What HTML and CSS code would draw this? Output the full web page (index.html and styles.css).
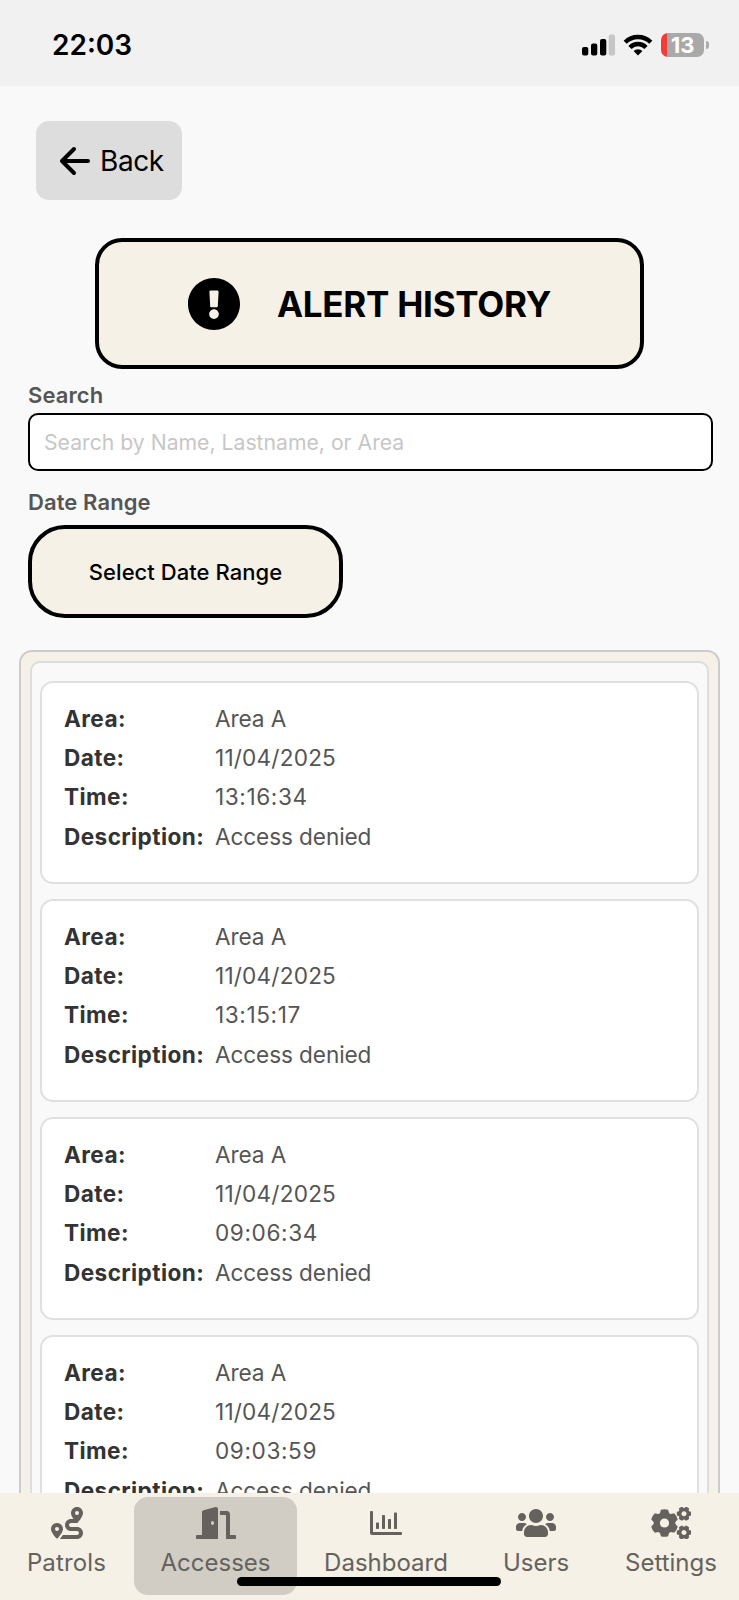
FILE: index.html
```html
<!DOCTYPE html>
<html lang="en">
<head>
<meta charset="utf-8">
<title>Alert History</title>
<link rel="stylesheet" href="styles.css">
</head>
<body>
<div class="screen">
  <header class="status">
    <span class="clock">22:03</span>
    <div class="indicators">
      <svg class="signal" width="33" height="22" viewBox="0 0 33 22"><rect x="0" y="13" width="6.300" height="8.500" rx="2"/><rect x="9" y="9.500" width="6.300" height="12" rx="2"/><rect x="18" y="5" width="6.300" height="16.500" rx="2"/><rect x="26.700" y="0.500" width="6.300" height="21" rx="2" fill="#c6c6c6"/></svg>
      <svg class="wifi" width="30" height="22" viewBox="0 0 30 22"><g fill="none" stroke="#000" stroke-width="4.400"><path d="M2.200 8.200A18.200 18.200 0 0 1 27.800 8.200"/><path d="M7 13.400A11 11 0 0 1 23 13.400"/></g><path d="M15 21.500l-4.400-4.500a6.300 6.300 0 0 1 8.800 0z"/></svg>
      <div class="battery"><span class="level">13</span></div><span class="cap"></span>
    </div>
  </header>

  <main class="content">
    <button class="back">
      <svg width="32" height="30" viewBox="0 0 32 30" fill="none" stroke="#000" stroke-width="4" stroke-linecap="round" stroke-linejoin="round"><path d="M16 3L4 15l12 12M4.500 15H30"/></svg>
      Back
    </button>

    <h1 class="title">
      <svg width="52" height="52" viewBox="8 8 496 496"><path d="M504 256c0 136.997-111.043 248-248 248S8 392.997 8 256C8 119.083 119.043 8 256 8s248 111.083 248 248zm-248 50c-25.405 0-46 20.595-46 46s20.595 46 46 46 46-20.595 46-46-20.595-46-46-46zm-43.673-165.346l7.418 136c.347 6.364 5.609 11.346 11.982 11.346h48.546c6.373 0 11.635-4.982 11.982-11.346l7.418-136c.375-6.874-5.098-12.654-11.982-12.654h-63.383c-6.884 0-12.356 5.780-11.981 12.654z"/></svg>
      <span>ALERT HISTORY</span>
    </h1>

    <div class="filters">
      <label class="label" for="q">Search</label>
      <input class="search" id="q" placeholder="Search by Name, Lastname, or Area">
      <span class="label label-date">Date Range</span>
      <button class="range">Select Date Range</button>
    </div>

    <section class="panel">
      <div class="list">
        <dl class="card"><dt>Area:</dt><dd>Area A</dd><dt>Date:</dt><dd class="date">11/04/2025</dd><dt>Time:</dt><dd class="time">13:16:34</dd><dt>Description:</dt><dd>Access denied</dd></dl>
        <dl class="card"><dt>Area:</dt><dd>Area A</dd><dt>Date:</dt><dd class="date">11/04/2025</dd><dt>Time:</dt><dd class="time">13:15:17</dd><dt>Description:</dt><dd>Access denied</dd></dl>
        <dl class="card"><dt>Area:</dt><dd>Area A</dd><dt>Date:</dt><dd class="date">11/04/2025</dd><dt>Time:</dt><dd class="time">09:06:34</dd><dt>Description:</dt><dd>Access denied</dd></dl>
        <dl class="card"><dt>Area:</dt><dd>Area A</dd><dt>Date:</dt><dd class="date">11/04/2025</dd><dt>Time:</dt><dd class="time">09:03:59</dd><dt>Description:</dt><dd>Access denied</dd></dl>
      </div>
    </section>
  </main>

  <nav class="tabs">
    <a class="tab"><svg width="32" height="32" viewBox="0 0 512 512"><path d="M512 96c0 50.200-59.100 125.100-84.600 155c-3.800 4.400-9.400 6.100-14.500 5H320c-17.700 0-32 14.300-32 32s14.300 32 32 32h96c53 0 96 43 96 96s-43 96-96 96H139.600c8.700-9.900 19.300-22.600 30-36.800c6.300-8.400 12.800-17.600 19-27.200H416c17.700 0 32-14.300 32-32s-14.300-32-32-32H320c-53 0-96-43-96-96s43-96 96-96h39.800c-21-31.500-39.800-67.700-39.800-96c0-53 43-96 96-96s96 43 96 96zM117.100 489.100c-3.800 4.300-7.200 8.100-10.100 11.300l-1.800 2-.2-.2c-6 4.600-14.600 4-20-1.800C59.800 473 0 402.500 0 352c0-53 43-96 96-96s96 43 96 96c0 30-21.100 67-43.500 97.900c-10.700 14.700-21.700 28-30.800 38.500l-.6 .7zM128 352a32 32 0 1 0 -64 0 32 32 0 1 0 64 0zM416 128a32 32 0 1 0 0-64 32 32 0 1 0 0 64z"/></svg><span>Patrols</span></a>
    <a class="tab active"><svg width="40" height="32" viewBox="0 0 640 512"><path d="M624 448h-80V113.450C544 86.190 522.470 64 496 64H384v64h96v384h144c8.840 0 16-7.160 16-16v-32c0-8.840-7.160-16-16-16zM312.240 1.010l-192 49.740C105.990 54.440 96 67.700 96 82.920V448H16c-8.840 0-16 7.160-16 16v32c0 8.840 7.160 16 16 16h336V33.180c0-21.580-19.560-37.410-39.760-32.170zM264 288c-13.250 0-24-14.330-24-32s10.750-32 24-32 24 14.330 24 32-10.750 32-24 32z"/></svg><span>Accesses</span></a>
    <a class="tab"><svg width="32" height="32" viewBox="0 0 32 32"><path d="M0 5a1 1 0 0 1 1-1h1a1 1 0 0 1 1 1v20h28a1 1 0 0 1 1 1v1a1 1 0 0 1-1 1H2a2 2 0 0 1-2-2z"/><rect x="6" y="15.500" width="3" height="6.500" rx=".7"/><rect x="12" y="8" width="3" height="14" rx=".7"/><rect x="18" y="12" width="3" height="10" rx=".7"/><rect x="24" y="5.500" width="3" height="16.500" rx=".7"/></svg><span>Dashboard</span></a>
    <a class="tab"><svg width="40" height="32" viewBox="0 0 640 512"><path d="M96 224c35.300 0 64-28.700 64-64s-28.700-64-64-64-64 28.700-64 64 28.700 64 64 64zm448 0c35.300 0 64-28.700 64-64s-28.700-64-64-64-64 28.700-64 64 28.700 64 64 64zm32 32h-64c-17.600 0-33.500 7.100-45.100 18.600 40.300 22.100 68.900 62 75.100 109.400h66c17.700 0 32-14.300 32-32v-32c0-35.300-28.700-64-64-64zm-256 0c61.900 0 112-50.100 112-112S381.900 32 320 32 208 82.100 208 144s50.100 112 112 112zm76.800 32h-8.300c-20.800 10-43.900 16-68.500 16s-47.600-6-68.500-16h-8.300C179.600 288 128 339.600 128 403.200V432c0 26.500 21.500 48 48 48h288c26.500 0 48-21.500 48-48v-28.800c0-63.600-51.600-115.200-115.200-115.200zm-223.700-13.400C161.500 263.100 145.600 256 128 256H64c-35.300 0-64 28.700-64 64v32c0 17.700 14.300 32 32 32h65.900c6.300-47.400 34.900-87.300 75.200-109.400z"/></svg><span>Users</span></a>
    <a class="tab"><svg width="40" height="32" viewBox="0 0 40 32">
      <defs><g id="gear"><circle r="10.800"/><path id="tooth" d="M-4.800-9L-3.600-13.200Q0-14.400 3.600-13.200L4.800-9z"/><use href="#tooth" transform="rotate(60)"/><use href="#tooth" transform="rotate(120)"/><use href="#tooth" transform="rotate(180)"/><use href="#tooth" transform="rotate(240)"/><use href="#tooth" transform="rotate(300)"/><circle class="hole" r="4.600"/></g></defs>
      <use href="#gear" x="13.500" y="16"/><use href="#gear" transform="translate(33 6.700) rotate(30) scale(.53)"/><use href="#gear" transform="translate(33 25.500) rotate(30) scale(.53)"/></svg><span>Settings</span></a>
    <span class="home-bar"></span>
  </nav>
</div>
</body>
</html>
```
FILE: styles.css
```css
* { box-sizing: border-box; }
body { margin: 0; font-family: Inter, "Liberation Sans", sans-serif; background: #f9f9f9; color: #000; }
button { font-family: inherit; color: inherit; }
svg { display: block; flex: none; }

.screen { width: 739px; height: 1600px; display: flex; flex-direction: column; overflow: hidden; }

.status { height: 86px; flex: none; background: #f1f1f1; display: flex; justify-content: space-between; align-items: center; padding: 3px 30px 0 52px; }
.clock { font-size: 28px; font-weight: 600; line-height: 34px; }
.indicators { display: flex; align-items: center; }
.wifi { margin-left: 8px; }
.battery { width: 43px; height: 24px; margin-left: 8px; border-radius: 7px; background: linear-gradient(90deg, #f43b36 6px, #a9a9a9 6px); display: flex; justify-content: center; align-items: center; }
.level { color: #fff; font-size: 22px; font-weight: 700; line-height: 24px; padding-top: 1px; }
.cap { width: 3px; height: 8px; margin-left: 2px; border-radius: 0 4px 4px 0; background: #ababab; }

.content { flex: 1; min-height: 0; overflow: hidden; display: flex; flex-direction: column; }
.back { width: 146px; height: 79px; flex: none; margin: 35px 0 0 36px; padding: 0 0 0 22px; border: 0; border-radius: 13px; background: #ddd; display: flex; align-items: center; gap: 10px; font-size: 28px; letter-spacing: -.4px; }

.title { width: 549px; height: 131px; flex: none; margin: 38px 0 0 95px; border: 4px solid #000; border-radius: 27px; background: #f5f1e6; display: flex; align-items: center; justify-content: center; gap: 37px; font-size: 35px; font-weight: 700; letter-spacing: -.25px; }

.filters { flex: none; display: flex; flex-direction: column; padding: 13px 26px 0 28px; }
.label { font-size: 22px; line-height: 26px; font-weight: 600; color: #555; letter-spacing: .1px; }
.label-date { margin-top: 18px; }
.search { height: 58px; margin-top: 5px; padding: 0 14px; border: 2px solid #000; border-radius: 10px; background: #fff; font-family: inherit; font-size: 21.200px; }
.search::placeholder { color: #c7c7c7; opacity: 1; }
.range { width: 315px; height: 93px; margin-top: 10px; padding: 0; border: 4px solid #000; border-radius: 37px; background: #f5f1e6; font-size: 22px; font-weight: 500; letter-spacing: .05px; }

.panel { flex: none; margin: 32px 19px 0; padding: 9px; border: 2px solid #ccc; border-bottom: 0; border-radius: 13px 13px 0 0; background: #f5f1e6; }
.list { padding: 18px 8px 0; border: 2px solid #ddd; border-bottom: 0; border-radius: 10px 10px 0 0; background: #f9f9f9; }
.card { height: 203px; margin: 0 0 15px; padding: 16px 22px; border: 2px solid #e0e0e0; border-radius: 13px; background: #fff; display: grid; grid-template-columns: 151px 1fr; grid-auto-rows: 39.200px; align-content: start; align-items: center; font-size: 22.600px; white-space: nowrap; }
.card dt { font-weight: 700; color: #333; letter-spacing: .4px; }
.card dd { margin: 0; color: #555; letter-spacing: -.1px; }
.card .date { letter-spacing: .2px; }
.card .time { letter-spacing: .6px; }

.tabs { position: relative; height: 107px; flex: none; padding: 4px 0 5px; background: #f5f1e6; display: grid; grid-template-columns: 134px 163px 178px 122px 148px; }
.tab { --tab-bg: #f5f1e6; display: flex; flex-direction: column; align-items: center; padding-top: 10px; gap: 9px; border-radius: 14px; background: var(--tab-bg); font-size: 24px; line-height: 30px; color: #65625d; }
.tab svg { fill: #65625d; }
.tab .hole { fill: var(--tab-bg); }
.tab:first-child { padding-right: 1px; letter-spacing: .15px; }
.active { --tab-bg: #d1cdc5; }
.home-bar { position: absolute; left: 237px; top: 84px; width: 264px; height: 9px; border-radius: 5px; background: #000; }
```
